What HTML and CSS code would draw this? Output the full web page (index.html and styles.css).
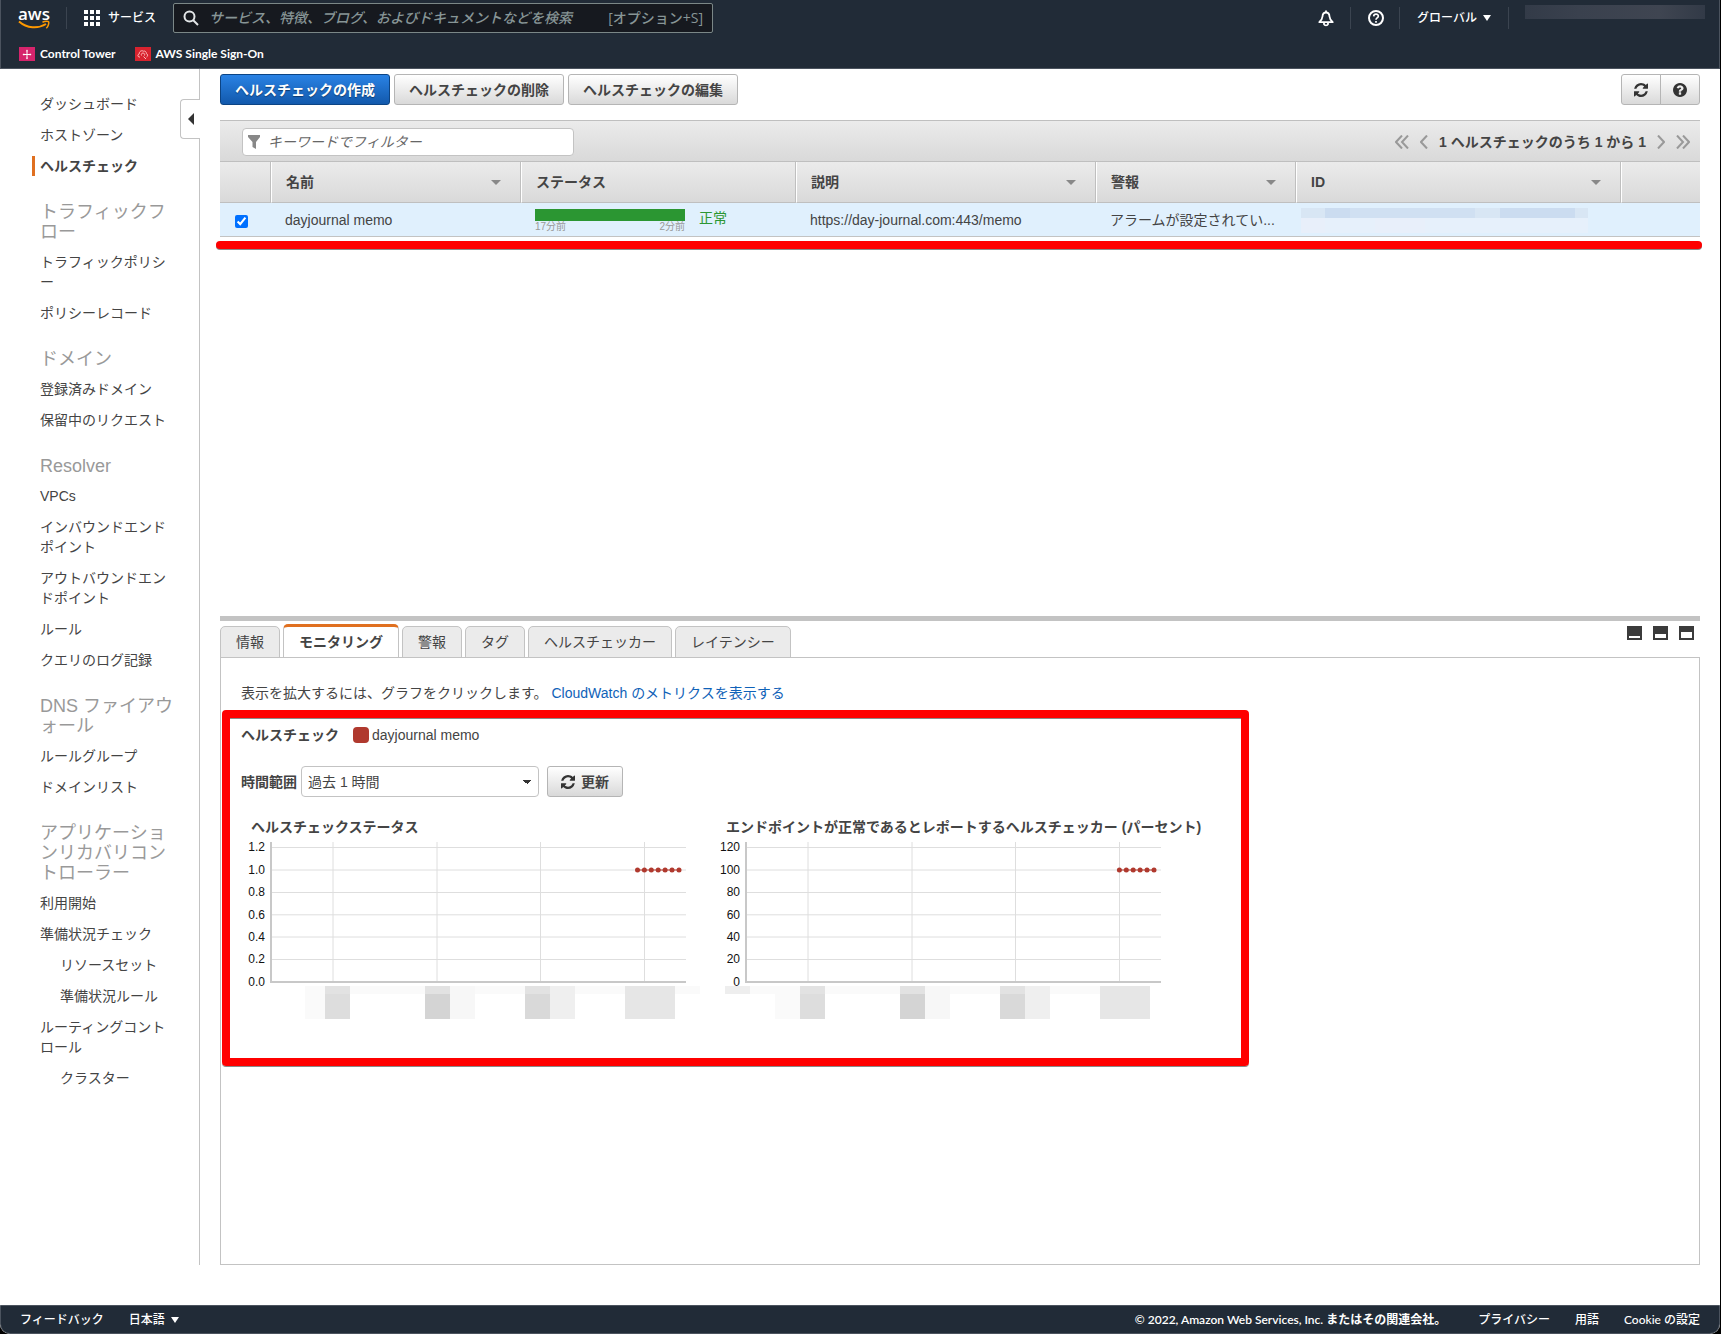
FILE: index.html
```html
<!DOCTYPE html>
<html lang="ja">
<head>
<meta charset="utf-8">
<meta name="viewport" content="width=device-width, initial-scale=1">
<title>Route 53 - ヘルスチェック</title>
<link rel="stylesheet" href="styles.css">
</head>
<body>
<svg class="defs" aria-hidden="true">
  <symbol id="i-refresh" viewBox="0 0 1536 1536"><path d="M1511 928q0 5-1 7-64 268-268 434.500t-478 166.500q-146 0-282.500-55t-243.500-157l-129 129q-19 19-45 19t-45-19-19-45v-448q0-26 19-45t45-19h448q26 0 45 19t19 45-19 45l-137 137q71 66 161 102t187 36q134 0 250-65t186-179q11-17 53-117 8-23 30-23h192q13 0 22.500 9.500t9.500 22.500zm25-800v448q0 26-19 45t-45 19h-448q-26 0-45-19t-19-45 19-45l138-138q-148-137-349-137-134 0-250 65t-186 179q-11 17-53 117-8 23-30 23h-199q-13 0-22.500-9.500t-9.500-22.500v-7q65-268 270-434.500t480-166.500q146 0 284 55.500t245 156.500l130-129q19-19 45-19t45 19 19 45z"/></symbol>
</svg>
<div class="window">
  <header class="top">
    <div class="top-row">
      <a class="logo" href="#" aria-label="aws"><span>aws</span><svg viewBox="0 0 32 10" width="32" height="10"><path d="M1 1.500C9 8.500 20 9 28 4" fill="none" stroke="#f90" stroke-width="2"/><path d="M24.500 2.200C27 1 30 1 30.600 1.800S30.300 6.500 28.300 8.300" fill="none" stroke="#f90" stroke-width="1.500"/></svg></a>
      <button class="services" type="button">
        <svg width="16" height="16" viewBox="0 0 16 16" fill="#fff"><path d="M0 0h4v4H0zM6 0h4v4H6zM12 0h4v4h-4zM0 6h4v4H0zM6 6h4v4H6zM12 6h4v4h-4zM0 12h4v4H0zM6 12h4v4H6zM12 12h4v4h-4z"/></svg>
        サービス</button>
      <label class="search">
        <svg width="16" height="16" viewBox="0 0 16 16" fill="none" stroke="#e3e6e8" stroke-width="2"><circle cx="6.500" cy="6.500" r="5"/><path d="M10 10l5 5"/></svg>
        <input type="search" aria-label="検索" placeholder="サービス、特徴、ブログ、およびドキュメントなどを検索">
        <span>[オプション+S]</span>
      </label>
      <nav class="top-right">
        <button type="button" aria-label="通知"><svg width="16" height="17" viewBox="0 0 16 17" fill="none" stroke="#fff" stroke-width="1.800" stroke-linejoin="round"><path d="M8 2.500C5.600 2.500 4.600 4.500 4.500 6.500C4.400 9 3.500 10 1.300 12.200H14.700C12.500 10 11.600 9 11.500 6.500C11.400 4.500 10.400 2.500 8 2.500zM8 .5v2M6 13v1.200c.6 1.600 3.400 1.600 4 0V13"/></svg></button>
        <button type="button" aria-label="ヘルプ"><svg width="16" height="16" viewBox="0 0 16 16" fill="none" stroke="#fff" stroke-width="2"><circle cx="8" cy="8" r="7"/><path d="M5.700 6.400C5.800 3.400 10.400 3.500 10.300 6.200C10.200 7.900 8 7.800 8 9.700M8 11v1.700" stroke-width="1.700"/></svg></button>
        <button type="button">グローバル<i class="tri"></i></button>
        <span class="account"><i></i></span>
      </nav>
    </div>
    <nav class="favorites">
      <a href="#"><svg width="16" height="14" viewBox="0 0 16 14"><rect width="16" height="14" fill="#d6246c"/><path d="M8 4v7M4.500 7.500h7" stroke="#fff" stroke-width="1"/><path d="M8 2.500L6.800 4.200h2.400zM8 12.500l-1.200-1.700h2.400zM3.500 7.500L5.200 6.300v2.400zM12.500 7.500L10.800 6.300v2.400z" fill="#fff"/></svg>Control Tower</a>
      <a href="#"><svg width="16" height="14" viewBox="0 0 16 14"><rect width="16" height="14" fill="#d8232f"/><path d="M5 10H4C2.500 9.500 2.500 7.500 4.200 7C4 4.500 6.500 3 8.500 4.200C10 3.500 11.500 5 11.300 6.500C13 7 13 9.500 11.500 10M6.500 8.500a1.700 1.700 0 1 1 3 0M8.500 9.500L11 12" fill="none" stroke="#fbb" stroke-width="1"/></svg>AWS Single Sign-On</a>
    </nav>
  </header>

  <div class="body">
    <aside class="side">
      <button class="collapse" type="button" aria-label="メニューを閉じる"><i></i></button>
      <nav>
        <ul>
          <li><a href="#">ダッシュボード</a></li>
          <li><a href="#">ホストゾーン</a></li>
          <li class="current"><a href="#">ヘルスチェック</a></li>
        </ul>
        <h2>トラフィックフロー</h2>
        <ul>
          <li><a href="#">トラフィックポリシー</a></li>
          <li><a href="#">ポリシーレコード</a></li>
        </ul>
        <h2>ドメイン</h2>
        <ul>
          <li><a href="#">登録済みドメイン</a></li>
          <li><a href="#">保留中のリクエスト</a></li>
        </ul>
        <h2>Resolver</h2>
        <ul>
          <li><a href="#">VPCs</a></li>
          <li><a href="#">インバウンドエンドポイント</a></li>
          <li><a href="#">アウトバウンドエンドポイント</a></li>
          <li><a href="#">ルール</a></li>
          <li><a href="#">クエリのログ記録</a></li>
        </ul>
        <h2>DNS ファイアウォール</h2>
        <ul>
          <li><a href="#">ルールグループ</a></li>
          <li><a href="#">ドメインリスト</a></li>
        </ul>
        <h2>アプリケーションリカバリコントローラー</h2>
        <ul>
          <li><a href="#">利用開始</a></li>
          <li><a href="#">準備状況チェック</a></li>
          <li class="sub"><a href="#">リソースセット</a></li>
          <li class="sub"><a href="#">準備状況ルール</a></li>
          <li><a href="#">ルーティングコントロール</a></li>
          <li class="sub"><a href="#">クラスター</a></li>
        </ul>
      </nav>
    </aside>

    <main class="main">
      <div class="actions">
        <button class="btn primary" type="button">ヘルスチェックの作成</button>
        <button class="btn" type="button">ヘルスチェックの削除</button>
        <button class="btn" type="button">ヘルスチェックの編集</button>
        <div class="btn-group">
          <button class="btn" type="button" aria-label="更新"><svg width="14" height="14"><use href="#i-refresh"/></svg></button>
          <button class="btn" type="button" aria-label="ヘルプ"><svg width="14" height="14" viewBox="128 128 1536 1536"><path d="M1024 1376v-192q0-14-9-23t-23-9h-192q-14 0-23 9t-9 23v192q0 14 9 23t23 9h192q14 0 23-9t9-23zm256-672q0-88-55.500-163t-138.500-116-170-41q-243 0-371 213-15 24 8 42l132 100q7 6 19 6 16 0 25-12 53-68 86-92 34-24 86-24 48 0 85.500 26t37.500 59q0 38-20 61t-68 45q-63 28-115.500 86.500t-52.500 125.500v36q0 14 9 23t23 9h192q14 0 23-9t9-23q0-19 21.500-49.500t54.500-49.500q32-18 49-28.500t46-35 44.500-48 28-60.500 12.500-81zm384 192q0 209-103 385.500t-279.500 279.500-385.500 103-385.500-103-279.500-279.500-103-385.500 103-385.500 279.500-279.500 385.500-103 385.500 103 279.500 279.500 103 385.500z"/></svg></button>
        </div>
      </div>

      <section class="list">
        <div class="toolbar">
          <label class="filter">
            <svg width="12" height="14" viewBox="0 0 12 14" fill="#888"><path d="M0 0h12v2L8 7v7l-3.500-2V7L0 2z"/></svg>
            <input type="text" aria-label="フィルター" placeholder="キーワードでフィルター">
          </label>
          <div class="pager">
            <button type="button" aria-label="最初"><svg width="14" height="14" viewBox="0 0 14 14"><path d="M7 .5L1 7l6 6.500M13 .5L7 7l6 6.500"/></svg></button>
            <button type="button" aria-label="前へ"><svg width="8" height="14" viewBox="0 0 8 14"><path d="M7 .5L1 7l6 6.500"/></svg></button>
            <span>1 ヘルスチェックのうち 1 から 1</span>
            <button type="button" aria-label="次へ"><svg width="8" height="14" viewBox="0 0 8 14"><path d="M1 .5L7 7l-6 6.500"/></svg></button>
            <button type="button" aria-label="最後"><svg width="14" height="14" viewBox="0 0 14 14"><path d="M1 .5L7 7l-6 6.500M7 .5L13 7l-6 6.500"/></svg></button>
          </div>
        </div>
        <table>
          <colgroup><col class="c-check"><col class="c-name"><col class="c-status"><col class="c-desc"><col class="c-alarm"><col class="c-id"><col></colgroup>
          <thead>
            <tr><th></th><th class="sort">名前</th><th>ステータス</th><th class="sort">説明</th><th class="sort">警報</th><th class="sort">ID</th><th></th></tr>
          </thead>
          <tbody>
            <tr>
              <td class="check"><input type="checkbox" aria-label="dayjournal memo" checked></td>
              <td>dayjournal memo</td>
              <td><div class="status"><div class="history"><i></i><span>17分前</span><span>2分前</span></div><b>正常</b></div></td>
              <td>https://day-journal.com:443/memo</td>
              <td>アラームが設定されてい...</td>
              <td class="id"><svg width="287" height="25" viewBox="0 0 287 25" shape-rendering="crispEdges"><path fill="#d0e0f2" d="M0 0h274v10H0z"/><path fill="#d8e6f4" d="M0 0h24v10H0zM174 0h25v10h-25zM274 0h13v10h-13z"/><path fill="#cbdcf0" d="M24 0h25v10H24zM199 0h75v10h-75z"/><path fill="#e6f0fb" d="M0 10h287v15H0z"/><path fill="#e8effa" d="M0 10h24v15H0zM74 10h50v15H74z"/></svg></td>
              <td></td>
            </tr>
          </tbody>
        </table>
        <div class="mark-line"></div>
      </section>

      <div class="splitter"></div>

      <section class="detail">
        <div class="tabs" role="tablist">
          <button type="button" role="tab">情報</button>
          <button type="button" role="tab" class="active" aria-selected="true">モニタリング</button>
          <button type="button" role="tab">警報</button>
          <button type="button" role="tab">タグ</button>
          <button type="button" role="tab">ヘルスチェッカー</button>
          <button type="button" role="tab">レイテンシー</button>
          <div class="panes">
            <svg width="15" height="14" viewBox="0 0 15 14"><path fill="#3b3b3b" d="M0 0h15v14H0z"/><path fill="#fff" d="M2 10h11v2H2z"/></svg>
            <svg width="15" height="14" viewBox="0 0 15 14"><path fill="#3b3b3b" d="M0 0h15v14H0z"/><path fill="#fff" d="M2 8h11v4H2z"/></svg>
            <svg width="15" height="14" viewBox="0 0 15 14"><path fill="#3b3b3b" d="M0 0h15v14H0z"/><path fill="#fff" d="M2 6h11v6H2z"/></svg>
          </div>
        </div>
        <div class="panel">
          <p class="hint">表示を拡大するには、グラフをクリックします。 <a href="#">CloudWatch のメトリクスを表示する</a></p>
          <div class="monitor">
            <div class="legend"><strong>ヘルスチェック</strong><i></i><span>dayjournal memo</span></div>
            <div class="range">
              <label for="range">時間範囲</label>
              <select id="range"><option>過去 1 時間</option></select>
              <button class="btn" type="button"><svg width="14" height="14"><use href="#i-refresh"/></svg>更新</button>
            </div>
            <div class="charts">
              <figure>
                <figcaption>ヘルスチェックステータス</figcaption>
                <svg width="475" height="182" viewBox="0 0 475 182">
                  <path class="grid" d="M30 7.500h415M30 30h415M30 52.500h415M30 74.800h415M30 97h415M30 119.500h415M92 2v140M196 2v140M299.500 2v140M403.500 2v140"/>
                  <path class="axis" d="M30 2v140h415"/>
                  <g class="ticks"><text x="24" y="11">1.2</text><text x="24" y="34">1.0</text><text x="24" y="56">0.8</text><text x="24" y="79">0.6</text><text x="24" y="101">0.4</text><text x="24" y="123">0.2</text><text x="24" y="146">0.0</text></g>
                  <g class="series"><path d="M396.500 30H438"/><circle cx="396.500" cy="30" r="2.500"/><circle cx="403.400" cy="30" r="2.500"/><circle cx="410.300" cy="30" r="2.500"/><circle cx="417.200" cy="30" r="2.500"/><circle cx="424.100" cy="30" r="2.500"/><circle cx="431" cy="30" r="2.500"/><circle cx="438" cy="30" r="2.500"/></g>
                  <g shape-rendering="crispEdges"><path fill="#fafafa" d="M64 146h395v8H64zM64 154h20v25H64z"/><path fill="#ddd" d="M84 146h25v33H84z"/><path fill="#d4d4d4" d="M184 146h25v33h-25z"/><path fill="#f7f7f7" d="M209 146h25v33h-25z"/><path fill="#d9d9d9" d="M284 146h25v33h-25z"/><path fill="#efefef" d="M309 146h25v33h-25z"/><path fill="#e6e6e6" d="M384 146h50v33h-50z"/><path fill="#e2e2e2" d="M84 146h25v8H84zM184 146h25v8h-25zM284 146h25v8h-25z"/></g>
                </svg>
              </figure>
              <figure>
                <figcaption>エンドポイントが正常であるとレポートするヘルスチェッカー (パーセント)</figcaption>
                <svg width="475" height="182" viewBox="0 0 475 182">
                  <path class="grid" d="M30 7.500h415M30 30h415M30 52.500h415M30 74.800h415M30 97h415M30 119.500h415M92 2v140M196 2v140M299.500 2v140M403.500 2v140"/>
                  <path class="axis" d="M30 2v140h415"/>
                  <g class="ticks"><text x="24" y="11">120</text><text x="24" y="34">100</text><text x="24" y="56">80</text><text x="24" y="79">60</text><text x="24" y="101">40</text><text x="24" y="123">20</text><text x="24" y="146">0</text></g>
                  <g class="series"><path d="M403.400 30H438"/><circle cx="403.400" cy="30" r="2.500"/><circle cx="410.300" cy="30" r="2.500"/><circle cx="417.200" cy="30" r="2.500"/><circle cx="424.100" cy="30" r="2.500"/><circle cx="431" cy="30" r="2.500"/><circle cx="438" cy="30" r="2.500"/></g>
                  <g shape-rendering="crispEdges"><path fill="#fafafa" d="M34 146h400v8H34zM59 154h25v25H59z"/><path fill="#eee" d="M9 146h25v8H9z"/><path fill="#ddd" d="M84 146h25v33H84z"/><path fill="#d4d4d4" d="M184 146h25v33h-25z"/><path fill="#f7f7f7" d="M209 146h25v33h-25z"/><path fill="#d9d9d9" d="M284 146h25v33h-25z"/><path fill="#efefef" d="M309 146h25v33h-25z"/><path fill="#e6e6e6" d="M384 146h50v33h-50z"/><path fill="#e2e2e2" d="M84 146h25v8H84zM184 146h25v8h-25zM284 146h25v8h-25z"/></g>
                </svg>
              </figure>
            </div>
          </div>
        </div>
      </section>
    </main>
  </div>

  <footer class="foot">
    <a href="#">フィードバック</a>
    <button type="button">日本語<i class="tri"></i></button>
    <span class="copy">© 2022, Amazon Web Services, Inc. またはその関連会社。</span>
    <a href="#">プライバシー</a>
    <a href="#">用語</a>
    <a href="#">Cookie の設定</a>
  </footer>
</div>
</body>
</html>
```
FILE: styles.css
```css
* { box-sizing: border-box; }
body {
  margin: 0;
  background: #000;
  color: #444;
  font: 14px/20px "Liberation Sans", "Noto Sans CJK JP", sans-serif;
}
a { color: inherit; text-decoration: none; }
button, input, select { font: inherit; color: inherit; margin: 0; }
button { background: none; border: 0; padding: 0; cursor: pointer; white-space: nowrap; }
svg { display: block; flex: none; }
ul { list-style: none; margin: 0; padding: 0; }
.defs { position: absolute; width: 0; height: 0; }

.window {
  display: flex;
  flex-direction: column;
  min-height: 100vh;
  margin-right: 1px;
  background: #fff;
  border-radius: 0 0 10px 10px;
  overflow: hidden;
}
.tri {
  border: 4px solid transparent;
  border-top: 6px solid currentColor;
  border-bottom: 0;
}

/* Header */
.top {
  height: 69px;
  background: #212b37;
  border: 1px solid #4b535e;
  border-top: 0;
  color: #fff;
  font: 500 12px/16px "Open Sans", "Noto Sans CJK JP", sans-serif;
}
.top-row { display: flex; align-items: center; height: 36px; padding: 0 14px 0 17px; }
.logo { display: flex; flex-direction: column; align-items: center; width: 32px; }
.logo span { font: 600 17px/15px "Open Sans", sans-serif; height: 14px; }
.services {
  display: flex; align-items: center; gap: 8px;
  height: 22px; margin-left: 16px; padding-left: 17px;
  border-left: 1px solid #3b4450;
}
.search {
  display: flex; align-items: center;
  width: 540px; height: 30px; margin: 0 auto 0 17px; padding: 0 9px;
  background: #16191f; border: 1px solid #7b8787; border-radius: 2px;
  font-size: 14px; color: #879596;
}
.search input { flex: 1; min-width: 0; margin-left: 10px; padding: 0; background: none; border: 0; outline: 0; }
.search input::placeholder { color: #879596; font-style: italic; opacity: 1; }
.top-right { display: flex; align-items: center; }
.top-right > * { display: flex; align-items: center; height: 22px; padding: 0 17px; border-left: 1px solid #3b4450; }
.top-right > :first-child { border-left: 0; padding-right: 16px; }
.top-right > :nth-child(2) { padding-right: 15px; }
.top-right .tri { margin-left: 6px; }
.top-right .account { padding: 0 0 0 16px; align-items: flex-start; }
.account i { width: 180px; height: 14px; margin-top: -2px; background: linear-gradient(90deg, #333b48, #3a414e 30%, #3f4551 75%, #323a47); }
.favorites { display: flex; gap: 19px; padding: 10px 18px 0; font: 700 12px/16px Lato, "Noto Sans CJK JP", sans-serif; }
.favorites a { display: flex; align-items: center; gap: 5px; }

/* Page body */
.body { display: flex; flex: 1; padding-bottom: 40px; }
.side {
  position: relative;
  flex: none;
  width: 200px;
  padding: 25px 23px 0 40px;
  border-right: 1px solid #c3c3c3;
}
.side h2 { margin: 26px 0 10px; font-size: 18px; line-height: 20px; font-weight: 400; color: #999; }
.side ul { display: grid; gap: 11px; }
.side a { display: block; }
.side .sub { padding-left: 20px; }
.side .current { margin-left: -8px; padding-left: 5px; border-left: 3px solid #e07020; font-weight: 700; }
.collapse {
  position: absolute; top: 30px; right: -1px;
  width: 20px; height: 40px;
  display: flex; align-items: center; justify-content: center;
  background: #fff; border: 1px solid #c3c3c3; border-right: 0; border-radius: 4px 0 0 4px;
}
.collapse i { border: 6px solid transparent; border-right-color: #333; border-left: 0; }

.main { flex: 1; min-width: 0; display: flex; flex-direction: column; padding: 5px 20px 0; }
.actions { display: flex; gap: 4px; margin-bottom: 15px; }
.btn {
  display: flex; align-items: center; justify-content: center; gap: 6px;
  height: 31px; padding: 0 14px;
  background: linear-gradient(#fff, #d9d9d9);
  border: 1px solid #b5b5b5; border-radius: 3px;
  font-weight: 700;
}
.btn svg { fill: #333; }
.btn.primary { background: linear-gradient(#2a82e4, #1259ac); border-color: #0c4484; color: #fff; text-shadow: 0 1px 1px #0c3a70; }
.btn-group { display: flex; margin-left: auto; }
.btn-group .btn { width: 40px; padding: 0; }
.btn-group .btn:first-child { border-radius: 3px 0 0 3px; }
.btn-group .btn:last-child { border-radius: 0 3px 3px 0; margin-left: -1px; }

.list { min-height: 496px; }
.toolbar {
  display: flex; align-items: center; justify-content: space-between;
  height: 42px; padding: 1px 10px 0 22px;
  background: linear-gradient(#ebebeb, #d9d9d9);
  border: solid #bfbfbf; border-width: 1px 0;
}
.filter {
  display: flex; align-items: center; gap: 8px;
  width: 332px; height: 28px; padding: 0 5px;
  background: #fff; border: 1px solid #c3c3c3; border-radius: 4px;
}
.filter input { flex: 1; min-width: 0; padding: 0; border: 0; outline: 0; background: none; }
.filter input::placeholder { color: #666; font-style: italic; opacity: 1; }
.pager { display: flex; align-items: center; gap: 11px; font-weight: 700; }
.pager svg { fill: none; stroke: #999; stroke-width: 2; }

table { width: 100%; table-layout: fixed; border-collapse: separate; border-spacing: 0; }
.c-check { width: 51px; }
.c-name { width: 250px; }
.c-status { width: 275px; }
.c-desc { width: 300px; }
.c-alarm { width: 200px; }
.c-id { width: 325px; }
th {
  position: relative;
  height: 41px; padding: 0 14px; text-align: left;
  background: linear-gradient(#ebebeb, #d9d9d9);
  border-bottom: 1px solid #bfbfbf; border-right: 1px solid #bfbfbf; border-left: 1px solid #fff;
}
th:first-child { border-left: 0; }
th:last-child { border-right: 0; }
.sort::after {
  content: ""; position: absolute; right: 19px; top: 18px;
  border: 5px solid transparent; border-top-color: #888; border-bottom: 0;
}
td {
  height: 34px; padding: 1px 14px 0;
  background: #e0f0fd; border-bottom: 1px solid #c3c3c3;
  white-space: nowrap;
}
.check input { display: block; width: 13px; height: 13px; margin: 2px 0 0 1px; accent-color: #0070ff; }
td.id { padding: 2px 0 0 5px; }
.status { display: flex; gap: 14px; line-height: 18px; }
.status b { font-weight: 400; color: #2b9632; margin-top: 2px; }
.history { display: flex; flex-wrap: wrap; justify-content: space-between; width: 150px; padding-top: 2px; font-size: 10px; line-height: 12px; color: #999; }
.history i { width: 100%; height: 12px; background: #2b9632; }
.mark-line { height: 8px; margin: 4px -2px 0 -4px; background: #f00; border-radius: 4px; box-shadow: 0 1px 0 #8a8a8a; }

.splitter { height: 5px; background: #c3c3c3; }
.detail { flex: 1; display: flex; flex-direction: column; padding-top: 3px; }
.tabs { display: flex; align-items: flex-end; gap: 3px; margin-bottom: -1px; }
.tabs button {
  height: 32px; padding: 0 15px;
  background: #ebebeb; border: 1px solid #c3c3c3; border-radius: 5px 5px 0 0;
}
.tabs .active { height: 34px; background: #fff; border-top: 3px solid #e07020; border-bottom-color: #fff; font-weight: 700; }
.panes { display: flex; gap: 11px; align-self: flex-start; margin: 2px 6px 0 auto; }
.panel { flex: 1; padding: 25px 1px; border: 1px solid #c3c3c3; }
.hint { margin: 0 0 7px 19px; }
.hint a { color: #0f62b8; }

.monitor { max-width: 1027px; height: 356px; padding: 7px 11px; border: 8px solid #f00; border-radius: 4px; box-shadow: 0 1px 0 #8a8a8a, inset 0 1px 0 #8a8a8a; }
.legend { display: flex; align-items: center; }
.legend i { width: 16px; height: 16px; margin: 0 3px 0 14px; background: #b0392e; border-radius: 4px; }
.range { display: flex; align-items: center; margin: 21px 0 20px; }
.range label { font-weight: 700; }
.range .btn { padding: 0 13px; }
.range select {
  appearance: none; width: 238px; height: 31px; margin: 0 8px 0 4px; padding: 0 6px;
  border: 1px solid #c3c3c3; border-radius: 4px;
  background: linear-gradient(45deg, transparent 50%, #333 50%) right 11px center / 4px 4px no-repeat, linear-gradient(-45deg, transparent 50%, #333 50%) right 7px center / 4px 4px no-repeat, #fff;
}
.charts { display: flex; }
figure { margin: 0; width: 475px; }
figcaption { height: 23px; padding-left: 10px; font-weight: 700; white-space: nowrap; }
.grid { fill: none; stroke: #dedede; }
.axis { fill: none; stroke: #c8c8c8; stroke-width: 2; }
.ticks { fill: #111; font-size: 12px; text-anchor: end; }
.series { fill: #b0392e; stroke: none; }
.series path { stroke: #b0392e; stroke-width: 1; }

/* Footer */
.foot {
  display: flex; align-items: center; gap: 25px;
  height: 29px; padding: 0 19px;
  background: #212b37; border: 1px solid #4b535e; border-radius: 0 0 10px 10px;
  color: #fff; font: 500 12px/16px Lato, "Noto Sans CJK JP", sans-serif;
}
.foot button { display: flex; align-items: center; gap: 6px; }
.foot .copy { margin: 0 7px 0 auto; font-weight: 600; }
```
